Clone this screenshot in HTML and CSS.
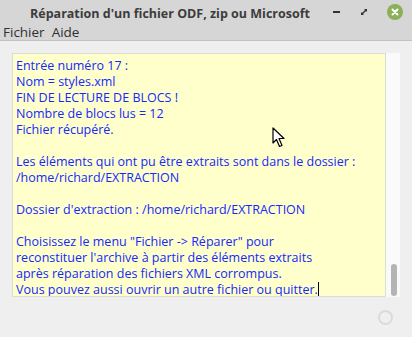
FILE: index.html
```html
<!DOCTYPE html>
<html lang="fr">
<head>
    <meta charset="UTF-8">
    <title>Réparation d'un fichier ODF, zip ou Microsoft</title>
    <link rel="stylesheet" href="styles.css">
</head>
<body>
    <div class="window">
        <div class="titlebar">
            <div class="title">Réparation d'un fichier ODF, zip ou Microsoft</div>
            <div class="controls">
                <span class="btn-min"></span>
                <svg class="btn-max" width="10" height="10" viewBox="0 0 10 10">
                    <path d="M2 8 L2 5 L5 8 Z M8 2 L8 5 L5 2 Z" fill="#333"/>
                    <path d="M3 7 L7 3" stroke="#333" stroke-width="1.4"/>
                </svg>
                <svg class="btn-close" width="16" height="16" viewBox="0 0 16 16">
                    <circle cx="8" cy="8" r="8" fill="#8cb05a"/>
                    <path d="M5.5 5.5 L10.5 10.5 M10.5 5.5 L5.5 10.5" stroke="#fff" stroke-width="2" stroke-linecap="round"/>
                </svg>
            </div>
        </div>
        <div class="menubar">
            <span class="menu-item">Fichier</span>
            <span class="menu-item">Aide</span>
        </div>
        <div class="content">
            <div class="log-wrap">
                <div class="log">
                    <p>Entrée numéro 17 :</p>
                    <p>Nom = styles.xml</p>
                    <p>FIN DE LECTURE DE BLOCS !</p>
                    <p>Nombre de blocs lus = 12</p>
                    <p>Fichier récupéré.</p>
                    <p>&nbsp;</p>
                    <p>Les éléments qui ont pu être extraits sont dans le dossier :</p>
                    <p>/home/richard/EXTRACTION</p>
                    <p>&nbsp;</p>
                    <p>Dossier d'extraction : /home/richard/EXTRACTION</p>
                    <p>&nbsp;</p>
                    <p>Choisissez le menu "Fichier -&gt; Réparer" pour</p>
                    <p>reconstituer l'archive à partir des éléments extraits</p>
                    <p>après réparation des fichiers XML corrompus.</p>
                    <p>Vous pouvez aussi ouvrir un autre fichier ou quitter.<span class="caret"></span></p>
                </div>
                <div class="scrollbar"><div class="thumb"></div></div>
            </div>
            <div class="statusbar"><span class="spinner"></span></div>
        </div>
        <!-- pointeur de la souris -->
        <svg class="pointer" width="14" height="22" viewBox="0 0 14 22">
            <path d="M1 1 L1 16 L4.5 12.5 L7.5 19.5 L10 18.5 L7 11.5 L12 11.5 Z" fill="#fff" stroke="#000" stroke-width="1.2" stroke-linejoin="round"/>
        </svg>
    </div>
</body>
</html>
```

FILE: styles.css
```css
*{
    box-sizing: border-box;
}
html,
body{
    margin: 0;
    padding: 0;
}
body{
    width: 412px;
    height: 337px;
    overflow: hidden;
    font-family: "Open Sans", "Noto Sans", sans-serif;
    background-color: #efefef;
}
.window{
    position: relative;
    height: 337px;
    display: flex;
    flex-direction: column;
}
.titlebar{
    height: 24px;
    background-color: #d6d6d6;
    display: flex;
    align-items: center;
    position: relative;
}
.title{
    width: 340px;
    text-align: center;
    font-weight: bold;
    font-size: 12.5px;
    color: #3c3c3c;
    padding-top: 2px;
}
.controls{
    flex: 1;
    display: flex;
    align-items: center;
    justify-content: space-between;
    padding: 0 9px 0 0;
}
.btn-min{
    display: block;
    width: 7px;
    height: 2px;
    background-color: #333;
    margin-left: -7px;
}
.btn-max{
    display: block;
}
.btn-close{
    display: block;
}
.menubar{
    height: 17px;
    background-color: #d6d6d6;
    border-bottom: 1px solid #c2c2c2;
    display: flex;
    gap: 7px;
    padding-left: 3px;
    font-size: 13.5px;
    line-height: 17px;
    color: #303030;
}
.content{
    flex: 1;
    display: flex;
    flex-direction: column;
    padding: 12px 12px 0 12px;
}
.log-wrap{
    display: flex;
    height: 244px;
}
.log{
    flex: 1;
    background-color: #ffffcc;
    border: 1px solid #dcdcd0;
    padding: 4px 0 0 3px;
    font-size: 12.5px;
    line-height: 16px;
    color: #1428ff;
    overflow: hidden;
}
.log p{
    margin: 0;
    white-space: nowrap;
}
.caret{
    display: inline-block;
    width: 1px;
    height: 15px;
    background-color: #000;
    vertical-align: -3px;
}
.scrollbar{
    width: 14px;
    background-color: #fafafa;
    position: relative;
}
.thumb{
    position: absolute;
    left: 5px;
    bottom: 1px;
    width: 6px;
    height: 32px;
    border-radius: 3px;
    background-color: #b4b4b4;
}
.statusbar{
    flex: 1;
    display: flex;
    justify-content: flex-end;
    align-items: center;
    padding: 0 7px 0 0;
}
.spinner{
    display: block;
    width: 15px;
    height: 15px;
    border: 2px solid #dadada;
    border-radius: 50%;
}
.pointer{
    position: absolute;
    left: 272px;
    top: 127px;
}
```
